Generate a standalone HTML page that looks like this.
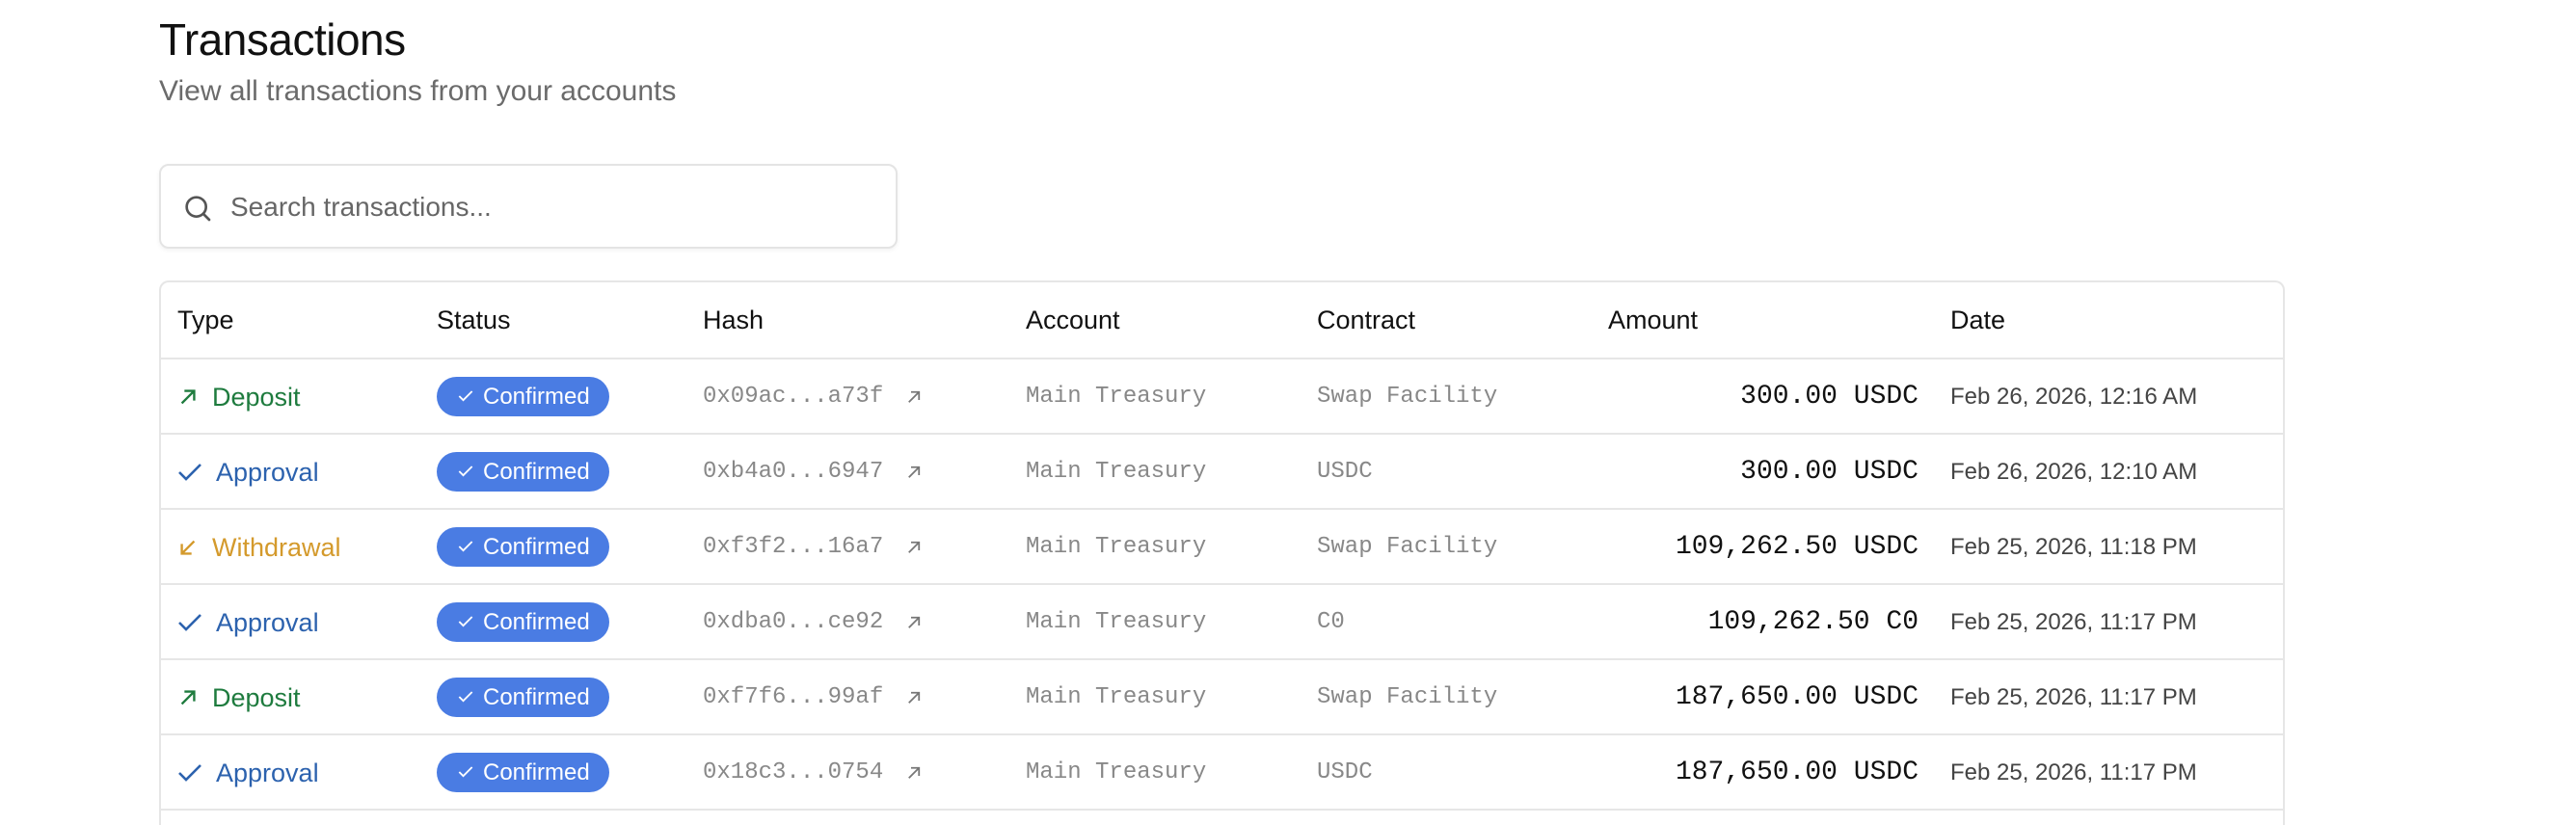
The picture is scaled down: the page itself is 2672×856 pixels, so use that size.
<!DOCTYPE html>
<html><head><meta charset="utf-8"><style>
*{margin:0;padding:0;box-sizing:border-box}
html,body{width:2672px;height:856px;overflow:hidden;background:#fff;font-family:"Liberation Sans",sans-serif;color:#111}
.t{position:absolute;left:165px;top:14px;font-size:46px;letter-spacing:-0.5px}
.s{position:absolute;left:165px;top:78px;font-size:30px;color:#6b6b6b}
.search{position:absolute;left:165px;top:170px;width:766px;height:88px;border:2px solid #e4e4e4;border-radius:10px;box-shadow:0 2px 4px rgba(0,0,0,.05)}
.search svg{position:absolute;left:22px;top:28px}
.search span{position:absolute;left:72px;top:27px;font-size:28px;color:#666}
.tbl{position:absolute;left:165px;top:291px;width:2205px;height:565px;border:2px solid #e6e6e6;border-bottom:none;border-radius:10px 10px 0 0;overflow:hidden}
.row{position:absolute;left:0;width:100%;height:78px;border-bottom:2px solid #e6e6e6}
.c{position:absolute;top:0;height:78px;line-height:78px;white-space:nowrap}
.h .c{font-size:27px;color:#111}
.ty{font-size:27px;left:17px}
.ty svg{vertical-align:middle;margin-right:14px;position:relative;top:-2px}
.badge{position:absolute;left:286px;top:18px;width:179px;height:41px;border-radius:21px;background:#4a7ce3;color:#fff;font-size:24px;line-height:41px;padding-left:20px}
.badge svg{vertical-align:middle;margin-right:8px;position:relative;top:-2px}
.m{font-family:"Liberation Mono",monospace;font-size:24px;color:#888}
.ar{position:absolute;left:772px;top:30px}
.amt{font-family:"Liberation Mono",monospace;font-size:28px;color:#111;right:378px;text-align:right}
.d{font-size:24px;color:#444;left:1856px}
.g{color:#1e7b3e}.b{color:#2c62ae}.o{color:#d49a2c}
</style></head><body>
<div class="t">Transactions</div>
<div class="s">View all transactions from your accounts</div>
<div class="search"><svg width="32" height="32" viewBox="0 0 24 24" fill="none" stroke="#555" stroke-width="2" stroke-linecap="round"><circle cx="11" cy="11" r="7.5"/><path d="M16.5 16.5L21 21"/></svg><span>Search transactions...</span></div>
<div class="tbl">
<div class="row h" style="top:0;height:80px">
<div class="c" style="left:17px">Type</div><div class="c" style="left:286px">Status</div><div class="c" style="left:562px">Hash</div><div class="c" style="left:897px">Account</div><div class="c" style="left:1199px">Contract</div><div class="c" style="left:1501px">Amount</div><div class="c" style="left:1856px">Date</div>
</div>
<div class="row" style="top:80px"><div class="c ty g"><svg width="22" height="22" viewBox="0 0 24 24" fill="none" stroke="#1e7b3e" stroke-width="2.6"><path d="M5 19L19 5M8 5h11v11"/></svg>Deposit</div><div class="badge"><svg width="20" height="20" viewBox="0 0 24 24" fill="none" stroke="#fff" stroke-width="2.2"><path d="M4 12l5 5L20 6"/></svg>Confirmed</div><div class="c m" style="left:562px">0x09ac...a73f</div><svg class="ar" width="18" height="18" viewBox="0 0 24 24" fill="none" stroke="#777" stroke-width="2.4"><path d="M5 19L19 5M8 5h11v11"/></svg><div class="c m" style="left:897px">Main Treasury</div><div class="c m" style="left:1199px">Swap Facility</div><div class="c amt">300.00 USDC</div><div class="c d">Feb 26, 2026, 12:16 AM</div></div>
<div class="row" style="top:158px"><div class="c ty b"><svg width="26" height="22" viewBox="0 0 26 22" fill="none" stroke="#2c62ae" stroke-width="2.6"><path d="M2 11l7 7L24 3"/></svg>Approval</div><div class="badge"><svg width="20" height="20" viewBox="0 0 24 24" fill="none" stroke="#fff" stroke-width="2.2"><path d="M4 12l5 5L20 6"/></svg>Confirmed</div><div class="c m" style="left:562px">0xb4a0...6947</div><svg class="ar" width="18" height="18" viewBox="0 0 24 24" fill="none" stroke="#777" stroke-width="2.4"><path d="M5 19L19 5M8 5h11v11"/></svg><div class="c m" style="left:897px">Main Treasury</div><div class="c m" style="left:1199px">USDC</div><div class="c amt">300.00 USDC</div><div class="c d">Feb 26, 2026, 12:10 AM</div></div>
<div class="row" style="top:236px"><div class="c ty o"><svg width="22" height="22" viewBox="0 0 24 24" fill="none" stroke="#d49a2c" stroke-width="2.6"><path d="M19 5L5 19M5 8v11h11"/></svg>Withdrawal</div><div class="badge"><svg width="20" height="20" viewBox="0 0 24 24" fill="none" stroke="#fff" stroke-width="2.2"><path d="M4 12l5 5L20 6"/></svg>Confirmed</div><div class="c m" style="left:562px">0xf3f2...16a7</div><svg class="ar" width="18" height="18" viewBox="0 0 24 24" fill="none" stroke="#777" stroke-width="2.4"><path d="M5 19L19 5M8 5h11v11"/></svg><div class="c m" style="left:897px">Main Treasury</div><div class="c m" style="left:1199px">Swap Facility</div><div class="c amt">109,262.50 USDC</div><div class="c d">Feb 25, 2026, 11:18 PM</div></div>
<div class="row" style="top:314px"><div class="c ty b"><svg width="26" height="22" viewBox="0 0 26 22" fill="none" stroke="#2c62ae" stroke-width="2.6"><path d="M2 11l7 7L24 3"/></svg>Approval</div><div class="badge"><svg width="20" height="20" viewBox="0 0 24 24" fill="none" stroke="#fff" stroke-width="2.2"><path d="M4 12l5 5L20 6"/></svg>Confirmed</div><div class="c m" style="left:562px">0xdba0...ce92</div><svg class="ar" width="18" height="18" viewBox="0 0 24 24" fill="none" stroke="#777" stroke-width="2.4"><path d="M5 19L19 5M8 5h11v11"/></svg><div class="c m" style="left:897px">Main Treasury</div><div class="c m" style="left:1199px">C0</div><div class="c amt">109,262.50 C0</div><div class="c d">Feb 25, 2026, 11:17 PM</div></div>
<div class="row" style="top:392px"><div class="c ty g"><svg width="22" height="22" viewBox="0 0 24 24" fill="none" stroke="#1e7b3e" stroke-width="2.6"><path d="M5 19L19 5M8 5h11v11"/></svg>Deposit</div><div class="badge"><svg width="20" height="20" viewBox="0 0 24 24" fill="none" stroke="#fff" stroke-width="2.2"><path d="M4 12l5 5L20 6"/></svg>Confirmed</div><div class="c m" style="left:562px">0xf7f6...99af</div><svg class="ar" width="18" height="18" viewBox="0 0 24 24" fill="none" stroke="#777" stroke-width="2.4"><path d="M5 19L19 5M8 5h11v11"/></svg><div class="c m" style="left:897px">Main Treasury</div><div class="c m" style="left:1199px">Swap Facility</div><div class="c amt">187,650.00 USDC</div><div class="c d">Feb 25, 2026, 11:17 PM</div></div>
<div class="row" style="top:470px"><div class="c ty b"><svg width="26" height="22" viewBox="0 0 26 22" fill="none" stroke="#2c62ae" stroke-width="2.6"><path d="M2 11l7 7L24 3"/></svg>Approval</div><div class="badge"><svg width="20" height="20" viewBox="0 0 24 24" fill="none" stroke="#fff" stroke-width="2.2"><path d="M4 12l5 5L20 6"/></svg>Confirmed</div><div class="c m" style="left:562px">0x18c3...0754</div><svg class="ar" width="18" height="18" viewBox="0 0 24 24" fill="none" stroke="#777" stroke-width="2.4"><path d="M5 19L19 5M8 5h11v11"/></svg><div class="c m" style="left:897px">Main Treasury</div><div class="c m" style="left:1199px">USDC</div><div class="c amt">187,650.00 USDC</div><div class="c d">Feb 25, 2026, 11:17 PM</div></div>
</div>
</body></html>
